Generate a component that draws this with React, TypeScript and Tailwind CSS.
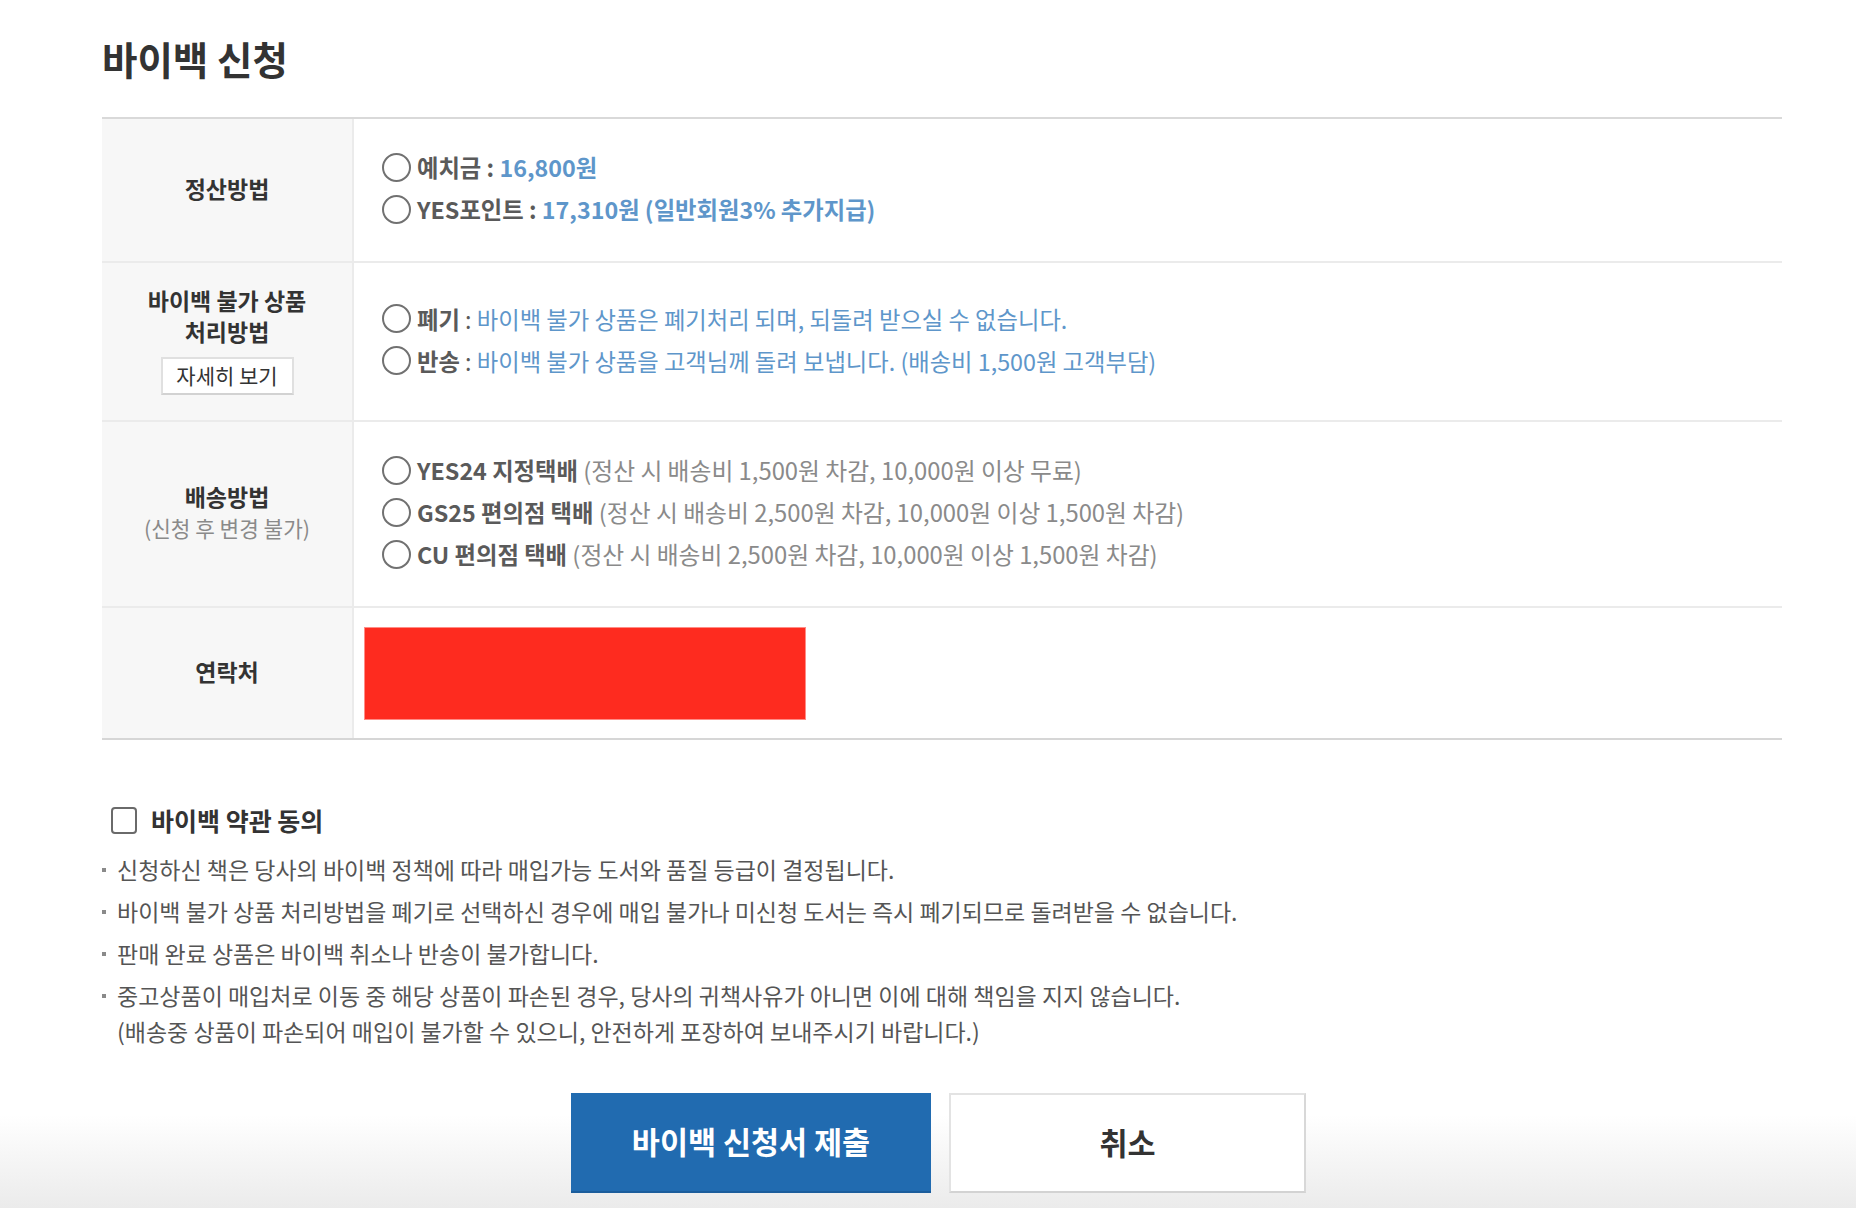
import React from "react";

const Radio = () => (
  <span className="w-[29px] h-[29px] shrink-0 rounded-full border-2 border-[#717171] bg-white" />
);

function OptionLine({ children }: { children: React.ReactNode }) {
  return (
    <div className="flex items-center h-[42px] gap-[6px] text-[23.3px] leading-[42px]">
      <Radio />
      <span className="whitespace-nowrap">{children}</span>
    </div>
  );
}

function Row({
  label,
  children,
  h,
  last,
  contentClass,
}: {
  label: React.ReactNode;
  children: React.ReactNode;
  h: string;
  last?: boolean;
  contentClass?: string;
}) {
  return (
    <div className={`grid grid-cols-[252px_1fr] ${h} ${last ? "" : "border-b-2 border-[#ebebeb]"}`}>
      <div className="bg-[#f7f7f7] border-r-2 border-[#ebebeb] flex flex-col items-center justify-center text-center pb-[4px]">
        {label}
      </div>
      <div className={contentClass ?? "flex flex-col justify-center pl-[28px] pb-[4px]"}>{children}</div>
    </div>
  );
}

const notes = [
  ["신청하신 책은 당사의 바이백 정책에 따라 매입가능 도서와 품질 등급이 결정됩니다."],
  ["바이백 불가 상품 처리방법을 폐기로 선택하신 경우에 매입 불가나 미신청 도서는 즉시 폐기되므로 돌려받을 수 없습니다."],
  ["판매 완료 상품은 바이백 취소나 반송이 불가합니다."],
  [
    "중고상품이 매입처로 이동 중 해당 상품이 파손된 경우, 당사의 귀책사유가 아니면 이에 대해 책임을 지지 않습니다.",
    "(배송중 상품이 파손되어 매입이 불가할 수 있으니, 안전하게 포장하여 보내주시기 바랍니다.)",
  ],
];

export default function App() {
  return (
    <div className="h-[1208px] overflow-hidden bg-[linear-gradient(to_bottom,#ffffff_1115px,#ebebeb_1208px)] font-['Noto_Sans_CJK_KR','Noto_Sans',sans-serif] text-[#333]">
      <div className="ml-[102px] w-[1680px] pt-[37px]">
        <h2 className="text-[38.5px] font-bold leading-[42px] text-[#333]">바이백 신청</h2>

        <div className="mt-[38px] border-t-2 border-[#d9d9d9] border-b-2 border-b-[#d6d6d6]">
          <Row
            h="h-[144px]"
            label={<span className="text-[23px] font-bold leading-[30px] text-[#333]">정산방법</span>}
          >
            <OptionLine>
              <span className="font-bold text-[#5a5a5a]">예치금</span>
              <span className="font-bold text-[#5a5a5a]"> : </span>
              <span className="font-bold text-[#5e96ca]">16,800원</span>
            </OptionLine>
            <OptionLine>
              <span className="font-bold text-[#5a5a5a]">YES포인트</span>
              <span className="font-bold text-[#5a5a5a]"> : </span>
              <span className="font-bold text-[#5e96ca]">17,310원 (일반회원3% 추가지급)</span>
            </OptionLine>
          </Row>

          <Row
            h="h-[159px]"
            label={
              <div className="flex flex-col items-center">
                <span className="text-[23px] font-bold leading-[31px] text-[#333]">바이백 불가 상품</span>
                <span className="text-[23px] font-bold leading-[31px] text-[#333]">처리방법</span>
                <button className="mt-[10px] w-[133px] h-[38px] bg-white border-2 border-[#e0e0e0] border-b-[#d2d2d2] text-[21px] text-[#333] leading-none">
                  자세히 보기
                </button>
              </div>
            }
          >
            <OptionLine>
              <span className="font-bold text-[#5a5a5a]">폐기</span>
              <span className="text-[#5a5a5a]"> : </span>
              <span className="text-[#5e96ca]">바이백 불가 상품은 폐기처리 되며, 되돌려 받으실 수 없습니다.</span>
            </OptionLine>
            <OptionLine>
              <span className="font-bold text-[#5a5a5a]">반송</span>
              <span className="text-[#5a5a5a]"> : </span>
              <span className="text-[#5e96ca]">바이백 불가 상품을 고객님께 돌려 보냅니다. (배송비 1,500원 고객부담)</span>
            </OptionLine>
          </Row>

          <Row
            h="h-[186px]"
            label={
              <div className="flex flex-col items-center">
                <span className="text-[23px] font-bold leading-[31px] text-[#333]">배송방법</span>
                <span className="text-[21.3px] leading-[31px] text-[#8a8a8a]">(신청 후 변경 불가)</span>
              </div>
            }
          >
            <OptionLine>
              <span className="font-bold text-[#5a5a5a]">YES24 지정택배</span>
              <span className="text-[#8a8a8a] text-[23.8px]"> (정산 시 배송비 1,500원 차감, 10,000원 이상 무료)</span>
            </OptionLine>
            <OptionLine>
              <span className="font-bold text-[#5a5a5a]">GS25 편의점 택배</span>
              <span className="text-[#8a8a8a] text-[23.8px]"> (정산 시 배송비 2,500원 차감, 10,000원 이상 1,500원 차감)</span>
            </OptionLine>
            <OptionLine>
              <span className="font-bold text-[#5a5a5a]">CU 편의점 택배</span>
              <span className="text-[#8a8a8a] text-[23.8px]"> (정산 시 배송비 2,500원 차감, 10,000원 이상 1,500원 차감)</span>
            </OptionLine>
          </Row>

          <Row
            h="h-[130px]"
            last
            contentClass="flex items-center pl-[10px]"
            label={<span className="text-[23px] font-bold leading-[30px] text-[#333]">연락처</span>}
          >
            <div className="w-[442px] h-[93px] bg-[#fe2b1f] border border-[#ff8c86]" />
          </Row>
        </div>

        <div className="mt-[62px] h-[36px] flex items-center pl-[9px] gap-[14px]">
          <span className="w-[26px] h-[27px] rounded-[4px] border-2 border-[#6a6a6a] bg-white shrink-0" />
          <span className="text-[25px] font-bold text-[#333] leading-[36px]">바이백 약관 동의</span>
        </div>

        <ul className="mt-[13px] flex flex-col gap-[6px]">
          {notes.map((lines, i) => (
            <li key={i} className="flex">
              <span className="w-[15px] shrink-0 pt-[17px]">
                <span className="block w-[4px] h-[4px] bg-[#8a8a8a]" />
              </span>
              <div className="flex flex-col">
                {lines.map((l, j) => (
                  <span key={j} className="text-[23px] leading-[36px] text-[#555] whitespace-nowrap">
                    {l}
                  </span>
                ))}
              </div>
            </li>
          ))}
        </ul>

        <div className="mt-[44px] flex justify-center gap-[18px] pr-[7px]">
          <button className="w-[360px] h-[100px] bg-[#216bb0] border-b-2 border-[#1b5d9c] text-white text-[30.5px] font-bold">
            바이백 신청서 제출
          </button>
          <button className="w-[357px] h-[100px] bg-white border-2 border-[#e3e3e3] border-b-[#d3d3d3] border-r-[#d8d8d8] text-[#333] text-[30.5px] font-bold">
            취소
          </button>
        </div>
      </div>
    </div>
  );
}
